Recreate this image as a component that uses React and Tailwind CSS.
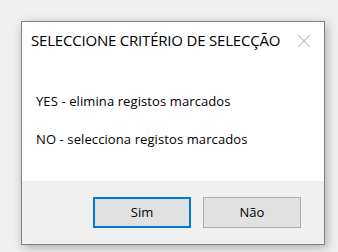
import React from "react";

const App = () => {
  return (
    <div
      className="w-[338px] h-[252px] bg-[#f0f0f0] pt-[21px] pl-[21px] overflow-hidden"
      style={{ fontFamily: '"Open Sans", "Noto Sans", sans-serif' }}
    >
      <div className="w-[304px] h-[224px] flex flex-col bg-white border border-[#808080] shadow-[2px_3px_10px_rgba(0,0,0,0.28)]">
        <div className="flex items-start justify-between pl-[9px] pr-[13px] pt-[8px] h-[45px]">
          <span className="text-[15px] leading-[20px] text-black tracking-[-0.2px]">
            SELECCIONE CRITÉRIO DE SELECÇÃO
          </span>
          <svg width="14" height="14" viewBox="0 0 14 14" className="mt-[4px]">
            <path d="M1 1L13 13M13 1L1 13" stroke="#c4c4c4" strokeWidth="1.1" />
          </svg>
        </div>
        <div className="flex flex-col pl-[14px] pt-[24px] gap-[18px] text-[13px] leading-[20px] text-black tracking-[0.1px]">
          <span>YES - elimina registos marcados</span>
          <span>NO - selecciona registos marcados</span>
        </div>
        <div className="mt-auto h-[63px] bg-[#f0f0f0] flex justify-end items-start pt-[16px] pr-[23px] gap-[12px]">
          <button className="w-[98px] h-[31px] bg-[#e1e1e1] border-2 border-[#0078d7] text-[13px] text-black">
            Sim
          </button>
          <button className="w-[98px] h-[31px] bg-[#e1e1e1] border border-[#adadad] text-[13px] text-black">
            Não
          </button>
        </div>
      </div>
    </div>
  );
};

export default App;
